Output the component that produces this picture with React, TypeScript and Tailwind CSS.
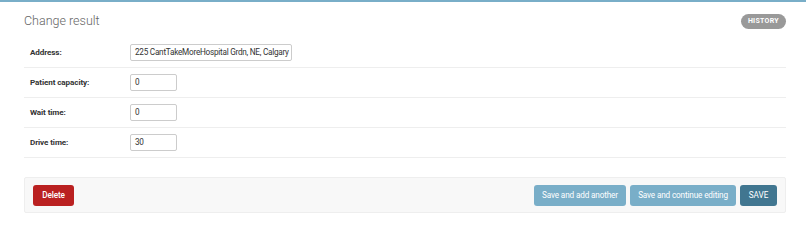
import React from "react";

const rows = [
  { label: "Address:", value: "225 CantTakeMoreHospital Grdn, NE, Calgary", wide: true },
  { label: "Patient capacity:", value: "0", wide: false },
  { label: "Wait time:", value: "0", wide: false },
  { label: "Drive time:", value: "30", wide: false },
];

export default function App() {
  return (
    <div className="w-[806px] h-[241px] bg-white border-t-2 border-[#79aec8] font-['Roboto',_'Liberation_Sans',_sans-serif] text-[#333]">
      <div className="pl-[24px] pr-[20px] pt-[10px]">
        <div className="flex items-center justify-between h-[18px]">
          <h1 className="text-[12.5px] font-light text-[#666] leading-none">Change result</h1>
          <span className="h-[15px] px-[7px] rounded-full bg-[#999] text-white text-[7px] font-bold tracking-[0.3px] flex items-center">HISTORY</span>
        </div>
        <div className="mt-[8px]">
          {rows.map((r) => (
            <div key={r.label} className="flex items-center h-[30px] border-b border-[#eee]">
              <div className="w-[106px] pl-[6px] text-[8.1px] font-bold tracking-[-0.1px] text-[#333]">{r.label}</div>
              <div
                className={`h-[17px] border border-[#ccc] rounded-[2px] pl-[4px] flex items-center whitespace-nowrap overflow-hidden text-[8.2px] tracking-[-0.25px] text-[#333] ${r.wide ? "w-[162px]" : "w-[47px]"}`}
              >
                {r.value}
              </div>
            </div>
          ))}
        </div>
        <div className="mt-[19px] h-[36px] bg-[#f8f8f8] border border-[#eee] rounded-[2px] flex items-center justify-between px-[8px]">
          <button className="h-[21px] w-[41px] rounded-[3px] bg-[#ba2121] text-white text-[8.2px] tracking-[-0.1px] font-medium">Delete</button>
          <div className="flex gap-[4px]">
            <button className="h-[21px] w-[92px] rounded-[3px] bg-[#79aec8] text-white text-[8.2px] tracking-[-0.15px]">Save and add another</button>
            <button className="h-[21px] w-[106px] rounded-[3px] bg-[#79aec8] text-white text-[8.2px] tracking-[-0.15px]">Save and continue editing</button>
            <button className="h-[21px] w-[37px] rounded-[3px] bg-[#417690] text-white text-[8.2px]">SAVE</button>
          </div>
        </div>
      </div>
    </div>
  );
}
